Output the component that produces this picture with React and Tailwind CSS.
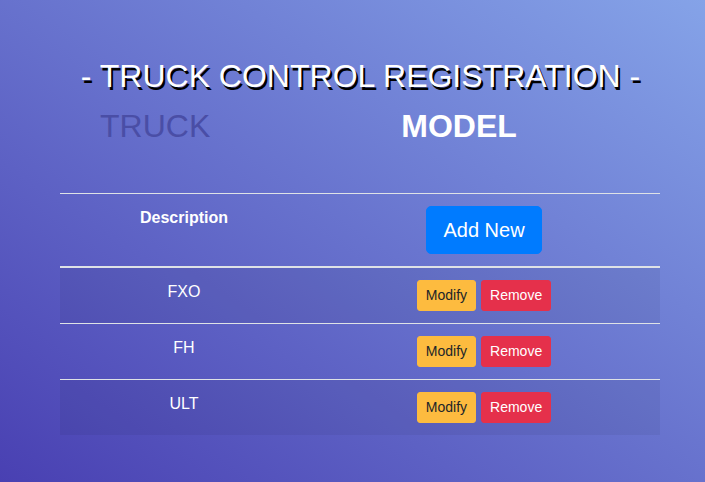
export default function App() {
  const rows = ["FXO", "FH", "ULT"];
  return (
    <div
      className="w-[705px] h-[482px] overflow-hidden bg-[linear-gradient(to_top_right,#4940b2,#85a3e8)] text-white"
      style={{ fontFamily: '"Liberation Sans", Arial, sans-serif' }}
    >
      <h1 className="pt-[57px] pl-[16px] text-center text-[32px] leading-[38px] [text-shadow:2px_3px_0_#000]">
        - TRUCK CONTROL REGISTRATION -
      </h1>
      <div className="flex mt-[12px] text-[32px] leading-[38px]">
        <div className="ml-[100px] text-[#4a4ea6]">TRUCK</div>
        <div className="ml-[191px] font-bold">MODEL</div>
      </div>
      <div className="ml-[60px] mt-[48px] w-[600px] text-[16px] leading-[24px]">
        <div className="flex border-t border-[#dee2e6] border-b-2">
          <div className="w-[248px] p-[12px] text-center font-bold">Description</div>
          <div className="flex-1 p-[12px] flex justify-center">
            <button className="bg-[#007bff] text-white text-[20px] leading-[30px] px-[16px] py-[8px] border border-[#007bff] rounded-[5px]">
              Add New
            </button>
          </div>
        </div>
        {rows.map((r, i) => (
          <div
            key={r}
            className={
              "flex border-[#dee2e6] " +
              (i > 0 ? "border-t " : "") +
              (i % 2 === 0 ? "bg-[rgba(0,0,0,0.05)]" : "")
            }
          >
            <div className="w-[248px] p-[12px] text-center">{r}</div>
            <div className="flex-1 p-[12px] flex justify-center gap-[5px]">
              <button className="bg-[#fdbb3f] text-[#212529] text-[14px] leading-[21px] px-[8px] py-[4px] border border-[#fdbb3f] rounded-[3px]">
                Modify
              </button>
              <button className="bg-[#e5304b] text-white text-[14px] leading-[21px] px-[8px] py-[4px] border border-[#e5304b] rounded-[3px]">
                Remove
              </button>
            </div>
          </div>
        ))}
      </div>
    </div>
  );
}
